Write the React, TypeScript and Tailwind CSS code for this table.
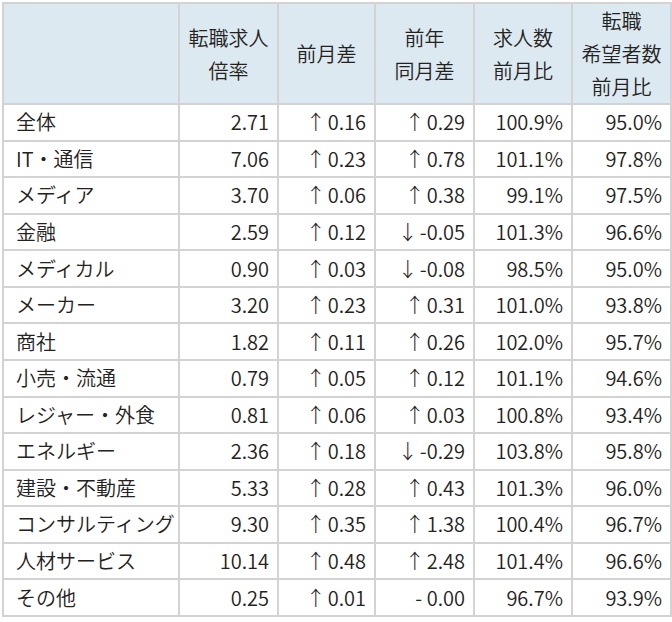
import React from "react";

const rows: [string, string, string, string, string, string][] = [
  ["全体", "2.71", "↑0.16", "↑0.29", "100.9%", "95.0%"],
  ["IT・通信", "7.06", "↑0.23", "↑0.78", "101.1%", "97.8%"],
  ["メディア", "3.70", "↑0.06", "↑0.38", "99.1%", "97.5%"],
  ["金融", "2.59", "↑0.12", "↓-0.05", "101.3%", "96.6%"],
  ["メディカル", "0.90", "↑0.03", "↓-0.08", "98.5%", "95.0%"],
  ["メーカー", "3.20", "↑0.23", "↑0.31", "101.0%", "93.8%"],
  ["商社", "1.82", "↑0.11", "↑0.26", "102.0%", "95.7%"],
  ["小売・流通", "0.79", "↑0.05", "↑0.12", "101.1%", "94.6%"],
  ["レジャー・外食", "0.81", "↑0.06", "↑0.03", "100.8%", "93.4%"],
  ["エネルギー", "2.36", "↑0.18", "↓-0.29", "103.8%", "95.8%"],
  ["建設・不動産", "5.33", "↑0.28", "↑0.43", "101.3%", "96.0%"],
  ["コンサルティング", "9.30", "↑0.35", "↑1.38", "100.4%", "96.7%"],
  ["人材サービス", "10.14", "↑0.48", "↑2.48", "101.4%", "96.6%"],
  ["その他", "0.25", "↑0.01", "- 0.00", "96.7%", "93.9%"],
];

function Cell({ v }: { v: string }) {
  const first = v[0];
  if (first === "↑" || first === "↓") {
    return (
      <>
        <span className="font-[300] mr-[2px]">{first}</span>
        {v.slice(1)}
      </>
    );
  }
  return <>{v}</>;
}

export default function App() {
  const font = { fontFamily: '"Noto Sans CJK JP", "Noto Sans", sans-serif' };
  return (
    <div className="bg-white w-[672px] h-[622px] pt-[2px] pl-[2px]" style={font}>
      <table className="table-fixed border-collapse text-[20px] font-[350] text-[#222] leading-[34px] w-[668px]">
        <colgroup>
          <col className="w-[176px]" />
          <col className="w-[99px]" />
          <col className="w-[97px]" />
          <col className="w-[99px]" />
          <col className="w-[98px]" />
          <col className="w-[99px]" />
        </colgroup>
        <thead>
          <tr className="bg-[#dde9f0] h-[101px] leading-[33px]">
            <th className="border-2 border-[#d3d3d3] font-[350] p-0"></th>
            <th className="border-2 border-[#d3d3d3] font-[350] text-center p-0">転職求人<br />倍率</th>
            <th className="border-2 border-[#d3d3d3] font-[350] text-center p-0">前月差</th>
            <th className="border-2 border-[#d3d3d3] font-[350] text-center p-0">前年<br />同月差</th>
            <th className="border-2 border-[#d3d3d3] font-[350] text-center p-0">求人数<br />前月比</th>
            <th className="border-2 border-[#d3d3d3] font-[350] text-center p-0">転職<br />希望者数<br />前月比</th>
          </tr>
        </thead>
        <tbody>
          {rows.map((r, i) => (
            <tr key={i} className="h-[36.57px]">
              <td className="border-2 border-[#d3d3d3] pl-[12px] whitespace-nowrap p-0">{r[0]}</td>
              {r.slice(1).map((c, j) => (
                <td key={j} className="border-2 border-[#d3d3d3] text-right pr-[8px] p-0 whitespace-nowrap">
                  <Cell v={c} />
                </td>
              ))}
            </tr>
          ))}
        </tbody>
      </table>
    </div>
  );
}
